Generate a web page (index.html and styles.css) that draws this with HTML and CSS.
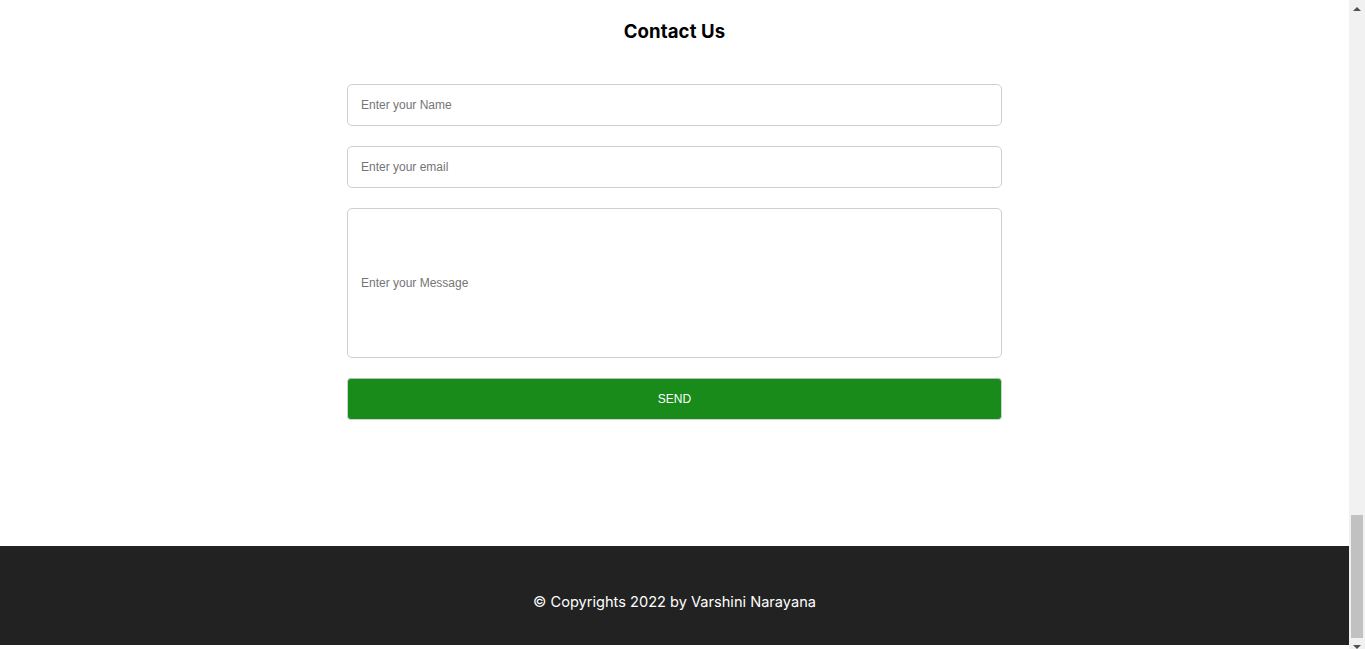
FILE: index.html
```html
<!DOCTYPE html>
<html lang="en">
<head>
<meta charset="utf-8">
<title>Contact Us</title>
<link rel="stylesheet" href="styles.css">
</head>
<body>
<div class="window">
  <div class="page">
    <section class="contact">
      <h2 class="contact-title">Contact Us</h2>
      <form class="contact-form">
        <input class="field" type="text" placeholder="Enter your Name">
        <input class="field" type="email" placeholder="Enter your email">
        <textarea class="field field-message" placeholder="Enter your Message"></textarea>
        <button class="send-btn" type="button">SEND</button>
      </form>
    </section>
    <footer class="footer">
      <p class="footer-text">© Copyrights 2022 by Varshini Narayana</p>
    </footer>
    <div class="page-end"></div>
  </div>
  <div class="scrollbar">
    <div class="sb-arrow sb-up"></div>
    <div class="sb-track"><div class="sb-thumb"></div></div>
    <div class="sb-arrow sb-down"></div>
  </div>
</div>
</body>
</html>
```

FILE: styles.css
```css
* { box-sizing: border-box; }
html, body { margin: 0; padding: 0; background: #fff; }
body { font-family: "Liberation Sans", Arial, sans-serif; overflow: hidden; }

.window { display: flex; width: 1365px; height: 649px; }
.page { width: 1349px; display: flex; flex-direction: column; }

.contact { height: 546px; display: flex; flex-direction: column; align-items: center; padding-top: 19px; }
.contact-title {
  margin: 0;
  font-family: Inter, "Noto Sans", sans-serif;
  font-weight: 700;
  font-size: 18.6px;
  line-height: 24px;
  color: #000;
  letter-spacing: 0.1px;
}
.contact-form { width: 655px; margin-top: 41px; display: flex; flex-direction: column; gap: 20px; }
.field {
  display: block;
  width: 100%;
  height: 42px;
  border: 1px solid #cfcfcf;
  border-radius: 5px;
  padding: 0 13px;
  font-family: "Liberation Sans", Arial, sans-serif;
  font-size: 12px;
  color: #333;
  background: #fff;
  outline: none;
}
.field::placeholder { color: #757575; }
.field-message { height: 150px; padding-top: 67px; line-height: 14px; resize: none; }
.send-btn {
  height: 42px;
  width: 100%;
  border: 1px solid #c9d6c9;
  border-top-color: #b9b9b9;
  border-radius: 4px;
  background: #188b1b;
  color: #fff;
  font-family: "Liberation Sans", Arial, sans-serif;
  font-size: 12px;
  padding: 0;
}

.footer { height: 99px; background: #222; display: flex; align-items: center; justify-content: center; }
.footer-text {
  margin: 0;
  color: #fff;
  font-family: Inter, "Noto Sans", sans-serif;
  font-size: 14.6px;
  padding-top: 12px;
}
.page-end { height: 4px; background: #fff; }

.scrollbar { width: 16px; height: 649px; background: #f1f1f1; display: flex; flex-direction: column; }
.sb-arrow { display: flex; justify-content: center; }
.sb-up { height: 17px; align-items: center; }
.sb-down { height: 11px; align-items: flex-end; }
.sb-up::before {
  content: ""; width: 0; height: 0;
  border-left: 4px solid transparent; border-right: 4px solid transparent;
  border-bottom: 4px solid #505050;
}
.sb-down::before {
  content: ""; width: 0; height: 0;
  border-left: 4px solid transparent; border-right: 4px solid transparent;
  border-top: 4px solid #505050;
}
.sb-track { flex: 1; display: flex; flex-direction: column; justify-content: flex-end; padding: 0 2px 0 2px; }
.sb-thumb { height: 123px; background: #c1c1c1; }
```
